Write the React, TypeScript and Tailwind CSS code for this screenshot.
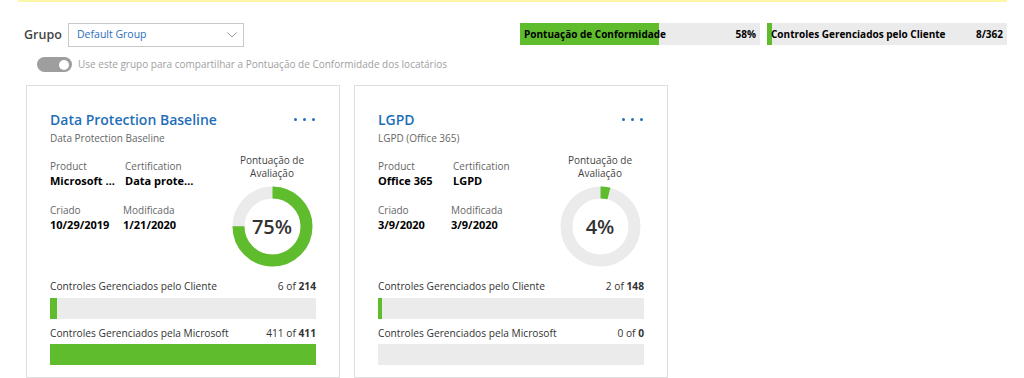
import React from "react";

const GREEN = "bg-[#5fbd2d]";

type Assessment = {
  title: string;
  subtitle: string;
  product: string;
  certification: string;
  created: string;
  modified: string;
  score: number;
  customer: [number, number];
  microsoft: [number, number];
};

const assessments: Assessment[] = [
  {
    title: "Data Protection Baseline",
    subtitle: "Data Protection Baseline",
    product: "Microsoft 365",
    certification: "Data protection",
    created: "10/29/2019",
    modified: "1/21/2020",
    score: 75,
    customer: [6, 214],
    microsoft: [411, 411],
  },
  {
    title: "LGPD",
    subtitle: "LGPD (Office 365)",
    product: "Office 365",
    certification: "LGPD",
    created: "3/9/2020",
    modified: "3/9/2020",
    score: 4,
    customer: [2, 148],
    microsoft: [0, 0],
  },
];

function Donut({ value }: { value: number }) {
  const r = 34;
  const c = 2 * Math.PI * r;
  return (
    <div className="relative w-[81px] h-[81px]">
      <svg width="81" height="81" viewBox="0 0 81 81" className="-rotate-90">
        <circle cx="40.5" cy="40.5" r={r} fill="none" stroke="#ebebeb" strokeWidth="12" />
        <circle
          cx="40.5"
          cy="40.5"
          r={r}
          fill="none"
          stroke="#5fbd2d"
          strokeWidth="12"
          strokeDasharray={`${(c * value) / 100} ${c}`}
        />
      </svg>
      <div className="absolute inset-0 flex items-center justify-center text-[20px] font-semibold text-[#333]">
        {value}%
      </div>
    </div>
  );
}

function ProgressRow({
  label,
  done,
  total,
  gap,
}: {
  label: string;
  done: number;
  total: number;
  gap: string;
}) {
  const pct = total > 0 ? (done / total) * 100 : 0;
  return (
    <div>
      <div className="flex justify-between text-[10.2px] leading-[14px] text-[#333]">
        <span>{label}</span>
        <span>
          {done} of <span className="font-bold">{total}</span>
        </span>
      </div>
      <div className={`${gap} h-[21px] bg-[#ebebeb]`}>
        <div className={`h-full ${GREEN}`} style={{ width: `${pct}%` }}></div>
      </div>
    </div>
  );
}

function Field({ label, value, width }: { label: string; value: string; width: string }) {
  return (
    <div className={width}>
      <div className="text-[10px] leading-[14px] text-[#666]">{label}</div>
      <div className="text-[11px] leading-[15px] font-bold text-black truncate pr-[6px]">{value}</div>
    </div>
  );
}

function AssessmentCard({ a }: { a: Assessment }) {
  return (
    <div className="w-[314px] h-[293px] border border-[#dedede] px-[23px] pt-[24px] shrink-0">
      <div className="flex justify-between items-start">
        <div>
          <div className="text-[14px] leading-[20px] font-semibold text-[#1f6fb8]">{a.title}</div>
          <div className="mt-[1px] text-[10px] leading-[14px] text-[#666]">{a.subtitle}</div>
        </div>
        <div className="flex gap-[6px] pt-[8px] pr-[1px]">
          <span className="w-[3px] h-[3px] rounded-full bg-[#1f6fb8]"></span>
          <span className="w-[3px] h-[3px] rounded-full bg-[#1f6fb8]"></span>
          <span className="w-[3px] h-[3px] rounded-full bg-[#1f6fb8]"></span>
        </div>
      </div>

      <div className="flex justify-between mt-[9px]">
        <div className="pt-[5px]">
          <div className="flex">
            <Field label="Product" value={a.product} width="w-[75px]" />
            <Field label="Certification" value={a.certification} width="w-[75px]" />
          </div>
          <div className="flex mt-[15px]">
            <Field label="Criado" value={a.created} width="w-[73px]" />
            <Field label="Modificada" value={a.modified} width="w-[75px]" />
          </div>
        </div>
        <div className="w-[88px] flex flex-col items-center">
          <div className="text-[10px] leading-[13px] text-[#444] text-center">
            Pontuação de
            <br />
            Avaliação
          </div>
          <div className="mt-[6px]">
            <Donut value={a.score} />
          </div>
        </div>
      </div>

      <div className="mt-[12px]">
        <ProgressRow
          label="Controles Gerenciados pelo Cliente"
          done={a.customer[0]}
          total={a.customer[1]}
          gap="mt-[5px]"
        />
      </div>
      <div className="mt-[7px]">
        <ProgressRow
          label="Controles Gerenciados pela Microsoft"
          done={a.microsoft[0]}
          total={a.microsoft[1]}
          gap="mt-[4px]"
        />
      </div>
    </div>
  );
}

function SummaryBar({ label, value, pct }: { label: string; value: string; pct: number }) {
  return (
    <div className="relative w-[240px] h-[22px] bg-[#ebebeb]">
      <div className={`absolute left-0 top-0 h-full ${GREEN}`} style={{ width: `${pct}%` }}></div>
      <div className="relative flex h-full items-center justify-between px-[4px] text-[10px] font-bold text-black">
        <span>{label}</span>
        <span>{value}</span>
      </div>
    </div>
  );
}

export default function App() {
  return (
    <div
      className="w-[1024px] h-[378px] overflow-hidden bg-white"
      style={{ fontFamily: '"Open Sans", "Noto Sans", sans-serif' }}
    >
      <div className="ml-[18px] w-[989px] h-[2px] bg-[#fdf6a6]"></div>

      <div className="flex items-start pt-[21px] pl-[24px]">
        <div className="flex items-center w-[496px]">
          <span className="text-[12.5px] font-semibold text-[#444] w-[44px]">Grupo</span>
          <div className="w-[176px] h-[24px] border border-[#c8c8c8] flex items-center justify-between pl-[8px] pr-[6px]">
            <span className="text-[10.5px] text-[#2a6ebb]">Default Group</span>
            <svg width="10" height="6" viewBox="0 0 10 6" fill="none">
              <path d="M0.5 0.5 L5 5 L9.5 0.5" stroke="#9a9a9a" strokeWidth="1" />
            </svg>
          </div>
        </div>
        <div className="flex gap-[7px]">
          <SummaryBar label="Pontuação de Conformidade" value="58%" pct={58} />
          <SummaryBar label="Controles Gerenciados pelo Cliente" value="8/362" pct={2.2} />
        </div>
      </div>

      <div className="flex items-center mt-[10px] pl-[37px]">
        <div className="w-[35px] h-[15px] rounded-full bg-[#9e9e9e] flex items-center justify-end pr-[3px]">
          <span className="w-[10px] h-[10px] rounded-full bg-white"></span>
        </div>
        <span className="ml-[6px] text-[10px] text-[#a0a0a0]">
          Use este grupo para compartilhar a Pontuação de Conformidade dos locatários
        </span>
      </div>

      <div className="flex gap-[14px] pl-[26px] mt-[13px]">
        {assessments.map((a) => (
          <AssessmentCard key={a.title} a={a} />
        ))}
      </div>
    </div>
  );
}
